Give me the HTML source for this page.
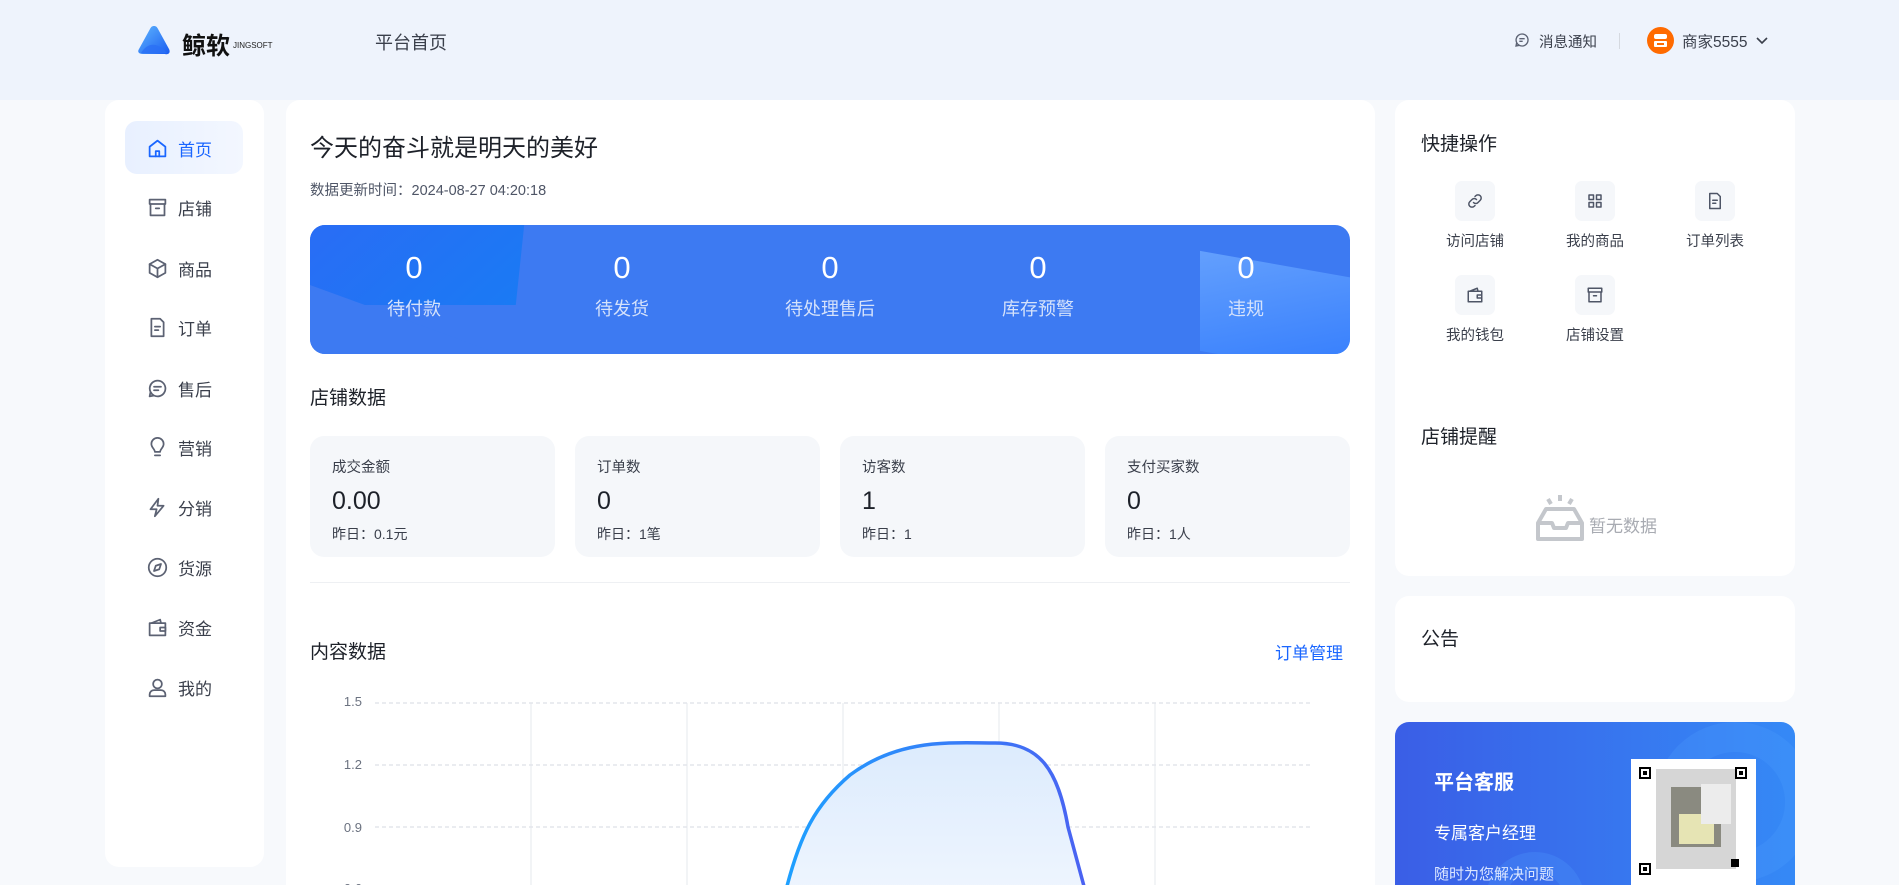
<!DOCTYPE html>
<html><head><meta charset="utf-8"><style>
*{margin:0;padding:0;box-sizing:border-box}
html,body{width:1899px;height:885px;overflow:hidden}
body{background:#f7f9fc;font-family:"Liberation Sans","Noto Sans CJK SC",sans-serif;color:#1d2129;position:relative}
.hdr{position:absolute;left:0;top:0;width:1899px;height:100px;background:#eef3fc}
.abs{position:absolute}
.card{position:absolute;background:#fff;border-radius:14px}
.nav{position:absolute;left:147px;width:100px;height:30px;display:flex;align-items:center;font-size:17px;color:#3a3f4b}
.nav svg{width:21px;height:21px;margin-right:10px;fill:none;stroke:#5c6273;stroke-width:2;stroke-linejoin:round;stroke-linecap:round}
.bn{position:absolute;top:225px;width:208px;text-align:center;color:#fff}
.bn b{display:block;font-weight:normal;font-size:31px;margin-top:25px;line-height:36px}
.bn span{display:block;font-size:18px;color:#d5e2fb;margin-top:9px}
.st{position:absolute;top:436px;width:245px;height:121px;background:#f5f7fa;border-radius:14px;padding-left:22px}
.st .l{font-size:14.5px;color:#3a3f4b;margin-top:20px}
.st .v{font-size:25px;color:#1d2129;margin-top:9px;line-height:30px}
.st .y{font-size:14px;color:#3a3f4b;margin-top:8px}
.qa{position:absolute;width:120px;text-align:center;font-size:14.5px;color:#3a3f4b}
.qa .bx{width:40px;height:40px;margin:0 auto 9px;background:#f5f7fa;border-radius:7px;display:flex;align-items:center;justify-content:center}
.qa svg{width:18px;height:18px;fill:none;stroke:#4e5566;stroke-width:2;stroke-linejoin:round;stroke-linecap:round}
</style></head><body>
<div class="hdr"></div>
<svg class="abs" style="left:137px;top:25px" width="34" height="30" viewBox="0 0 34 30"><defs><linearGradient id="lg" x1="0" y1="0" x2="1" y2="1"><stop offset="0" stop-color="#5fb6ff"/><stop offset="1" stop-color="#1a5cf0"/></linearGradient></defs><path d="M17 1 C19 1 20 2 21 4 L32 24 C34 28 31 30 28 29 L6 29 C2 29 0 27 2 24 L13 4 C14 2 15 1 17 1Z" fill="url(#lg)"/><path d="M4 28 C10 18 20 16 30 28Z" fill="#2a6ff5" opacity=".8"/></svg>
<div class="abs" style="left:182px;top:26px;font-size:24px;font-weight:bold;color:#111">鲸软</div>
<div class="abs" style="left:233px;top:41px;font-size:8px;color:#222">JINGSOFT</div>
<div class="abs" style="left:375px;top:29px;font-size:18px;color:#3a3f4b">平台首页</div>
<svg class="abs" style="left:1514px;top:32px" width="16" height="16" viewBox="0 0 24 24" fill="none" stroke="#5c6273" stroke-width="2"><path d="M12 3a9 9 0 1 1-8 13l-1 5 5-1A9 9 0 0 1 12 3z"/><path d="M8 10h8M8 14h5"/></svg>
<div class="abs" style="left:1539px;top:31px;font-size:14.5px;color:#3a3f4b">消息通知</div>
<div class="abs" style="left:1619px;top:33px;width:1px;height:16px;background:#d5d9e0"></div>
<div class="abs" style="left:1647px;top:27px;width:27px;height:27px;border-radius:50%;background:#ff6a00"></div>
<svg class="abs" style="left:1653px;top:33px" width="15" height="15" viewBox="0 0 15 15"><rect x="1" y="1" width="13" height="5" rx="2" fill="#fff"/><rect x="1" y="8" width="13" height="6" rx="1" fill="#fff"/><rect x="4" y="10" width="7" height="2" fill="#ff6a00"/></svg>
<div class="abs" style="left:1682px;top:30px;font-size:15.5px;color:#3a3f4b">商家5555</div>
<svg class="abs" style="left:1755px;top:36px" width="14" height="10" viewBox="0 0 14 10" fill="none" stroke="#3a3f4b" stroke-width="1.6"><path d="M2 2l5 5 5-5"/></svg>

<div class="card" style="left:105px;top:100px;width:159px;height:767px"></div>
<div class="abs" style="left:125px;top:121px;width:118px;height:53px;border-radius:12px;background:linear-gradient(90deg,#e8f0ff,#f3f7ff)"></div>
<div class="nav" style="top:133px;color:#1a66ff"><svg style="stroke:#1a66ff" viewBox="0 0 24 24"><path d="M3 10l9-7 9 7v11H3z"/><path d="M10 21v-6h4v6"/></svg>首页</div>
<div class="nav" style="top:192px"><svg viewBox="0 0 24 24"><rect x="3" y="3" width="18" height="5"/><path d="M4 8v13h16V8M10 13h4"/></svg>店铺</div>
<div class="nav" style="top:253px"><svg viewBox="0 0 24 24"><path d="M12 2l9 5v10l-9 5-9-5V7z"/><path d="M3 7l9 5 9-5M12 12v10"/></svg>商品</div>
<div class="nav" style="top:312px"><svg viewBox="0 0 24 24"><path d="M5 2h10l4 4v16H5z"/><path d="M9 11h6M9 15h4"/></svg>订单</div>
<div class="nav" style="top:373px"><svg viewBox="0 0 24 24"><path d="M12 3a9 9 0 1 1-8 13l-1 5 5-1A9 9 0 0 1 12 3z"/><path d="M8 10h8M8 14h5"/></svg>售后</div>
<div class="nav" style="top:432px"><svg viewBox="0 0 24 24"><path d="M9 17c0-3-4-5-4-9a7 7 0 0 1 14 0c0 4-4 6-4 9z"/><path d="M9 21h6"/></svg>营销</div>
<div class="nav" style="top:492px"><svg viewBox="0 0 24 24"><path d="M13 2L4 14h7l-2 8 10-12h-7z"/></svg>分销</div>
<div class="nav" style="top:552px"><svg viewBox="0 0 24 24"><circle cx="12" cy="12" r="10"/><path d="M16 8l-2 6-6 2 2-6z"/></svg>货源</div>
<div class="nav" style="top:612px"><svg viewBox="0 0 24 24"><path d="M3 7h18v14H3z"/><path d="M5 7l10-4 1 4M15 12h6v4h-6z"/></svg>资金</div>
<div class="nav" style="top:672px"><svg viewBox="0 0 24 24"><circle cx="12" cy="8" r="5"/><path d="M3 22v-2a5 5 0 0 1 5-5h8a5 5 0 0 1 5 5v2z"/></svg>我的</div>

<div class="card" style="left:286px;top:100px;width:1089px;height:785px;border-radius:14px 14px 0 0"></div>
<div class="abs" style="left:310px;top:128px;font-size:24px;color:#1d2129">今天的奋斗就是明天的美好</div>
<div class="abs" style="left:310px;top:179px;font-size:14.5px;color:#4e5566">数据更新时间：2024-08-27 04:20:18</div>
<div class="abs" style="left:310px;top:225px;width:1040px;height:129px;border-radius:15px;overflow:hidden;background:#3d7af2">
 <div class="abs" style="left:-20px;top:0;width:230px;height:80px;background:linear-gradient(135deg,#2a6cf5,#1a7af4);transform:skewX(-6deg)"></div>
 <div class="abs" style="left:0;top:60px;width:240px;height:80px;background:#3d7af2;transform:rotate(20deg);transform-origin:0 0"></div>
 <div class="abs" style="left:890px;top:40px;width:160px;height:100px;background:linear-gradient(160deg,#6aa6ff,#2f7bff);transform:skewY(10deg);opacity:.85"></div>
</div>
<div class="bn" style="left:310px"><b>0</b><span>待付款</span></div>
<div class="bn" style="left:518px"><b>0</b><span>待发货</span></div>
<div class="bn" style="left:726px"><b>0</b><span>待处理售后</span></div>
<div class="bn" style="left:934px"><b>0</b><span>库存预警</span></div>
<div class="bn" style="left:1142px"><b>0</b><span>违规</span></div>
<div class="abs" style="left:310px;top:383px;font-size:19px">店铺数据</div>
<div class="st" style="left:310px"><div class="l">成交金额</div><div class="v">0.00</div><div class="y">昨日：0.1元</div></div>
<div class="st" style="left:575px"><div class="l">订单数</div><div class="v">0</div><div class="y">昨日：1笔</div></div>
<div class="st" style="left:840px"><div class="l">访客数</div><div class="v">1</div><div class="y">昨日：1</div></div>
<div class="st" style="left:1105px"><div class="l">支付买家数</div><div class="v">0</div><div class="y">昨日：1人</div></div>
<div class="abs" style="left:310px;top:582px;width:1040px;height:1px;background:#eef0f3"></div>
<div class="abs" style="left:310px;top:637px;font-size:19px">内容数据</div>
<div class="abs" style="left:1275px;top:639px;font-size:17px;color:#1a66ff">订单管理</div>
<svg class="abs" style="left:300px;top:690px" width="1030" height="195" viewBox="300 690 1030 195">
 <defs><linearGradient id="ln" x1="0" x2="1"><stop offset="0" stop-color="#1ea0ff"/><stop offset="1" stop-color="#4a62f2"/></linearGradient>
 <linearGradient id="fl" x1="0" y1="0" x2="0" y2="1"><stop offset="0" stop-color="#dcebfd"/><stop offset="1" stop-color="#eef5fe"/></linearGradient></defs>
 <g font-family="Liberation Sans" font-size="13" fill="#6b7280" text-anchor="end"><text x="362" y="706">1.5</text><text x="362" y="769">1.2</text><text x="362" y="832">0.9</text><text x="362" y="893">0.6</text></g>
 <g stroke="#e6e8ec" stroke-width="1"><path d="M531 703V885M687 703V885M843 703V885M999 703V885M1155 703V885"/></g>
 <g stroke="#e3e6eb" stroke-width="1.5" stroke-dasharray="4 3"><path d="M375 703H1312M375 765H1312M375 827H1312"/></g>
 <path d="M786 890 C800 835 815 805 850 775 C900 738 950 743 995 743 C1040 743 1058 770 1068 827 L1085 890Z" fill="url(#fl)"/>
 <path d="M786 890 C800 835 815 805 850 775 C900 738 950 743 995 743 C1040 743 1058 770 1068 827 L1085 890" fill="none" stroke="url(#ln)" stroke-width="3.5"/>
</svg>

<div class="card" style="left:1395px;top:100px;width:400px;height:476px"></div>
<div class="abs" style="left:1421px;top:129px;font-size:19px">快捷操作</div>
<div class="qa" style="left:1415px;top:181px"><div class="bx"><svg viewBox="0 0 24 24"><path d="M10 14a4 4 0 0 0 6 0l3-3a4 4 0 0 0-6-6l-1 1M14 10a4 4 0 0 0-6 0l-3 3a4 4 0 0 0 6 6l1-1"/></svg></div>访问店铺</div>
<div class="qa" style="left:1535px;top:181px"><div class="bx"><svg viewBox="0 0 24 24"><rect x="4" y="4" width="6" height="6"/><rect x="14" y="4" width="6" height="6"/><rect x="4" y="14" width="6" height="6"/><rect x="14" y="14" width="6" height="6"/></svg></div>我的商品</div>
<div class="qa" style="left:1655px;top:181px"><div class="bx"><svg viewBox="0 0 24 24"><path d="M5 2h10l4 4v16H5z"/><path d="M9 11h6M9 15h4"/></svg></div>订单列表</div>
<div class="qa" style="left:1415px;top:275px"><div class="bx"><svg viewBox="0 0 24 24"><path d="M3 7h18v14H3z"/><path d="M5 7l10-4 1 4M15 12h6v4h-6z"/></svg></div>我的钱包</div>
<div class="qa" style="left:1535px;top:275px"><div class="bx"><svg viewBox="0 0 24 24"><rect x="3" y="3" width="18" height="5"/><path d="M4 8v13h16V8M10 13h4"/></svg></div>店铺设置</div>
<div class="abs" style="left:1421px;top:422px;font-size:19px">店铺提醒</div>
<svg class="abs" style="left:1534px;top:493px" width="52" height="50" viewBox="0 0 52 50" fill="none" stroke="#c4c7cc" stroke-width="4" stroke-linejoin="round"><path d="M26 2v6M14 6l3 5M38 6l-3 5"/><path d="M4 30l8-14h28l8 14v16H4z"/><path d="M4 30h14l2 5h12l2-5h14"/></svg>
<div class="abs" style="left:1589px;top:512px;font-size:17px;color:#a8abb2">暂无数据</div>
<div class="card" style="left:1395px;top:596px;width:400px;height:106px"></div>
<div class="abs" style="left:1421px;top:624px;font-size:19px">公告</div>
<div class="abs" style="left:1395px;top:722px;width:400px;height:163px;border-radius:14px 14px 0 0;overflow:hidden;background:linear-gradient(90deg,#3a5ee6,#3589f6)">
 <div class="abs" style="left:260px;top:0px;width:160px;height:160px;border-radius:50%;border:30px solid rgba(80,160,255,.25)"></div>
 <div class="abs" style="left:90px;top:130px;width:100px;height:100px;border-radius:50%;border:20px solid rgba(80,160,255,.25)"></div>
</div>
<div class="abs" style="left:1434px;top:766px;font-size:20px;font-weight:bold;color:#fff">平台客服</div>
<div class="abs" style="left:1434px;top:819px;font-size:17px;color:#fff">专属客户经理</div>
<div class="abs" style="left:1434px;top:863px;font-size:15px;color:#dbe6ff">随时为您解决问题</div>
<svg class="abs" style="left:1631px;top:759px" width="125" height="126" viewBox="0 0 125 126"><rect width="125" height="126" fill="#fff"/>
 <rect x="25" y="10" width="80" height="100" fill="#d6d6d6"/><rect x="40" y="28" width="50" height="60" fill="#8a8a80"/><rect x="48" y="55" width="35" height="30" fill="#e6e4b4"/><rect x="70" y="25" width="30" height="40" fill="#ececec"/>
 <g fill="#000"><rect x="8" y="8" width="12" height="12"/><rect x="104" y="8" width="12" height="12"/><rect x="8" y="104" width="12" height="12"/></g>
 <g fill="#fff"><rect x="10" y="10" width="8" height="8"/><rect x="106" y="10" width="8" height="8"/><rect x="10" y="106" width="8" height="8"/></g>
 <g fill="#000"><rect x="12" y="12" width="4" height="4"/><rect x="108" y="12" width="4" height="4"/><rect x="12" y="108" width="4" height="4"/><rect x="100" y="100" width="8" height="8"/></g>
</svg>
</body></html>
